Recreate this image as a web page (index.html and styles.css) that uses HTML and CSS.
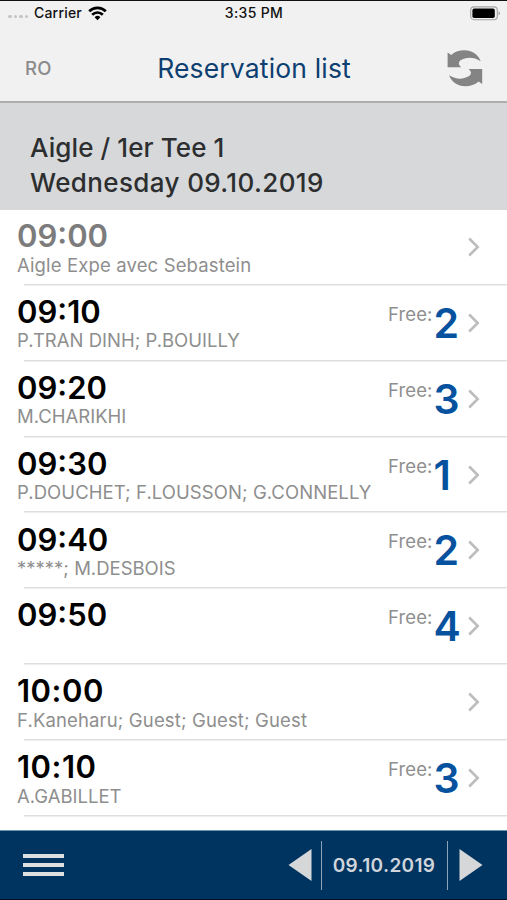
FILE: index.html
```html
<!DOCTYPE html>
<html lang="en">
<head>
<meta charset="utf-8">
<title>Reservation list</title>
<link rel="stylesheet" href="styles.css">
</head>
<body>
<div class="app">
  <div class="status">
    <div class="carrier">
      <span class="signal"><i></i><i></i><i></i><i></i></span>
      <span class="carrier-name">Carrier</span>
      <svg class="wifi" width="19" height="15" viewBox="0 0 19 15" fill="none" stroke="#000" stroke-width="2.7"><path d="M1.200 5.300a11.700 11.700 0 0 1 16.600 0M4.200 8.700a7.500 7.500 0 0 1 10.600 0"/><path d="M9.500 14.200l-2.900-3a4.200 4.200 0 0 1 5.800 0z" fill="#000" stroke="none"/></svg>
    </div>
    <span class="clock">3:35 PM</span>
    <svg class="battery" width="31" height="15" viewBox="0 0 31 15"><rect x="0.7" y="0.9" width="26.6" height="12.8" rx="3.4" fill="none" stroke="#a3a3a3" stroke-width="1.1"/><rect x="2.4" y="2.6" width="22.4" height="9.4" rx="1.8"/><path d="M28.600 5.300q1.300.6 1.300 2t-1.300 2z" fill="#999"/></svg>
  </div>
  <header class="navbar">
    <span class="user">RO</span>
    <h1 class="title">Reservation list</h1>
    <svg class="refresh" width="36" height="38" viewBox="0 0 36 38" fill="#848484"><path id="arrow" d="M.6 3.500L4.200 5.900C8 2.600 12.300 1.200 17.500 1.200c7.600 0 13.800 4.200 16.200 11C28.500 8.900 23.500 8.100 18.500 9.300c-4.200 1-6.700 2.800-6.700 5 0 1.500 1 2.600 2.400 4H.6z"/><use href="#arrow" transform="rotate(180 17.900 19.200)"/></svg>
  </header>
  <section class="banner">
    <div class="course">Aigle / 1er Tee 1</div>
    <div class="date">Wednesday 09.10.2019</div>
  </section>
  <main class="list">
    <div class="row past"><div class="slot"><div class="time">09:00</div><div class="names mixed">Aigle Expe avec Sebastein</div></div><svg class="chevron" viewBox="0 0 14 22"><path d="M2.200 2.500l8.500 8.500-8.500 8.500"/></svg></div>
    <div class="row"><div class="slot"><div class="time">09:10</div><div class="names">P.TRAN DINH; P.BOUILLY</div></div><span class="free">Free:</span><b class="count">2</b><svg class="chevron" viewBox="0 0 14 22"><path d="M2.200 2.500l8.500 8.500-8.500 8.500"/></svg></div>
    <div class="row"><div class="slot"><div class="time">09:20</div><div class="names">M.CHARIKHI</div></div><span class="free">Free:</span><b class="count">3</b><svg class="chevron" viewBox="0 0 14 22"><path d="M2.200 2.500l8.500 8.500-8.500 8.500"/></svg></div>
    <div class="row"><div class="slot"><div class="time">09:30</div><div class="names long">P.DOUCHET; F.LOUSSON; G.CONNELLY</div></div><span class="free">Free:</span><b class="count">1</b><svg class="chevron" viewBox="0 0 14 22"><path d="M2.200 2.500l8.500 8.500-8.500 8.500"/></svg></div>
    <div class="row"><div class="slot"><div class="time">09:40</div><div class="names">*****; M.DESBOIS</div></div><span class="free">Free:</span><b class="count">2</b><svg class="chevron" viewBox="0 0 14 22"><path d="M2.200 2.500l8.500 8.500-8.500 8.500"/></svg></div>
    <div class="row"><div class="slot"><div class="time">09:50</div></div><span class="free">Free:</span><b class="count">4</b><svg class="chevron" viewBox="0 0 14 22"><path d="M2.200 2.500l8.500 8.500-8.500 8.500"/></svg></div>
    <div class="row"><div class="slot"><div class="time ten">10:00</div><div class="names mixed">F.Kaneharu; Guest; Guest; Guest</div></div><svg class="chevron" viewBox="0 0 14 22"><path d="M2.200 2.500l8.500 8.500-8.500 8.500"/></svg></div>
    <div class="row"><div class="slot"><div class="time ten">10:10</div><div class="names">A.GABILLET</div></div><span class="free">Free:</span><b class="count">3</b><svg class="chevron" viewBox="0 0 14 22"><path d="M2.200 2.500l8.500 8.500-8.500 8.500"/></svg></div>
  </main>
  <footer class="toolbar">
    <div class="menu"><i></i><i></i><i></i></div>
    <svg class="prev" width="24" height="32" viewBox="0 0 24 32"><path d="M0.500 16L23.500 0v32z"/></svg>
    <div class="day">09.10.2019</div>
    <svg class="next" width="24" height="32" viewBox="0 0 24 32"><path d="M23.500 16L0.500 0v32z"/></svg>
  </footer>
</div>
</body>
</html>
```
FILE: styles.css
```css
* { box-sizing: border-box; }
body { margin: 0; font-family: Inter, "Liberation Sans", sans-serif; background: #fff; }
.app { width: 507px; height: 900px; display: flex; flex-direction: column; overflow: hidden; border-top: 1px solid #111; border-bottom: 1px solid #001020; }
.status { height: 26px; flex: none; display: grid; grid-template-columns: 1fr auto 1fr; align-items: center; background: #f1f1f1; padding: 0 6px 2px 8px; color: #111; font-size: 14px; font-weight: 500; line-height: 20px; }
.carrier { display: flex; align-items: center; }
.carrier-name { letter-spacing: 0.2px; }
.clock { letter-spacing: 0.35px; margin-right: 1px; }
.signal { display: flex; gap: 2px; margin-top: 7px; width: 26px; }
.signal i { width: 3.500px; height: 3.500px; border-radius: 50%; background: #c4c4c4; }
.wifi { margin-left: 6px; }
.battery { justify-self: end; }
.navbar { height: 76px; flex: none; display: flex; align-items: center; justify-content: space-between; padding: 8px 24px 0 25px; background: #f1f1f1; border-bottom: 2px solid #adafaf; }
.user { width: 36px; font-size: 18.500px; font-weight: 500; letter-spacing: 0.3px; color: #8b8b8b; }
.title { margin: 0; font-size: 26.500px; line-height: 34px; font-weight: 400; letter-spacing: 0.16px; color: #0d3f70; }
.banner { height: 107px; flex: none; padding: 27px 30px 0; background: #d6d8d9; color: #2d2e30; font-size: 26px; line-height: 35px; font-weight: 500; }
.course { letter-spacing: 0.1px; }
.date { letter-spacing: 0.38px; }
.list { flex: 1; background: #fff; overflow: hidden; }
.row { height: 75.850px; display: flex; align-items: flex-start; padding: 9px 26px 0 17px; background: linear-gradient(#dedede, #dedede) 24px calc(100% - 0.500px) / 100% 1.500px no-repeat; }
.slot { flex: 1; min-width: 0; white-space: nowrap; padding-top: 0.250px; }
.time { font-size: 31px; line-height: 34px; font-weight: 600; color: #000; }
.ten { letter-spacing: 0.5px; }
.past .time { color: #7c7c7c; }
.names { margin-top: -0.650px; font-size: 18.500px; line-height: 24px; color: #8e8e8e; }
.mixed { letter-spacing: 0.14px; }
.long { letter-spacing: 0.07px; }
.free { font-size: 18.500px; line-height: 24px; margin-top: 7px; margin-right: 1px; letter-spacing: 0.1px; color: #8e8e8e; }
.count { width: 33.500px; font-size: 41px; line-height: 40px; margin-top: 8px; font-weight: 600; color: #06529f; }
.chevron { width: 14px; height: 22px; margin-top: 17px; fill: none; stroke: #bdbdbd; stroke-width: 2.600; }
.toolbar { height: 69px; flex: none; display: flex; align-items: center; padding: 0 24px 0 23px; background: #003460; border-top: 1px solid #6b99b0; }
.menu { width: 41px; display: grid; gap: 5px; margin-right: auto; }
.menu i { height: 4px; background: #dedfe1; }
.toolbar svg { fill: #d6d7d9; }
.day { width: 127px; height: 49px; margin: 0 11px 0 9px; border: 1px solid #8fa3b8; border-width: 0 1px; display: flex; align-items: center; justify-content: center; font-size: 19px; font-weight: 600; letter-spacing: 0.350px; color: #d0d5dc; padding-right: 1px; }
```
